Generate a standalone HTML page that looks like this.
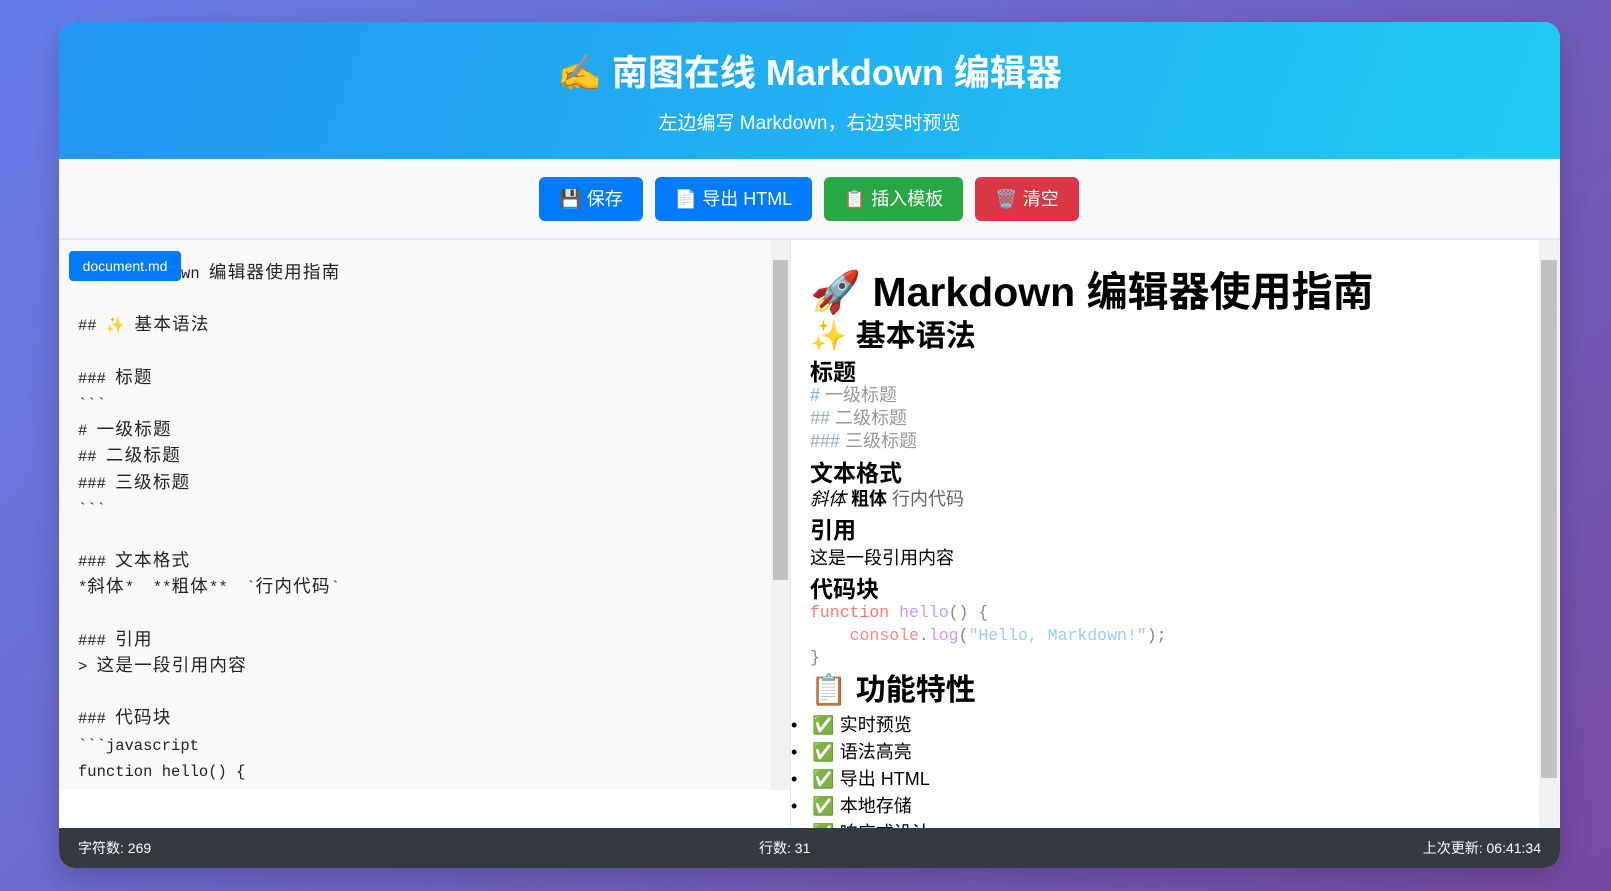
<!DOCTYPE html>
<html><head><meta charset="utf-8"><style>
*{margin:0;padding:0;box-sizing:border-box}
body{width:1611px;height:891px;overflow:hidden;background:linear-gradient(135deg,#667eea,#764ba2);font-family:"Liberation Sans","Noto Sans CJK SC",sans-serif;position:relative}
.card{position:absolute;left:59px;top:22px;width:1501px;height:846px;border-radius:16px;overflow:hidden;background:#fff;box-shadow:0 10px 30px rgba(0,0,0,.2)}
.hdr{position:absolute;left:0;top:0;width:100%;height:137px;background:linear-gradient(110deg,#2196f3,#21cbf3);color:#fff;text-align:center}
.hdr h1{position:absolute;top:28px;width:100%;font-size:36px;font-weight:bold;line-height:46px}
.hdr p{position:absolute;top:90px;width:100%;font-size:19px;line-height:24px}
.tb{position:absolute;top:137px;left:0;width:100%;height:81px;background:#f8f9fa;border-bottom:2px solid #e2e6ea}
.btn{position:absolute;top:18px;height:44px;border-radius:6px;color:#fff;font-size:18px;line-height:44px;text-align:center}
.ed{position:absolute;left:0;top:218px;width:731px;height:550px;background:#f9f9f9}
.ed pre{position:absolute;left:19px;top:21px;font-family:"Liberation Mono","Noto Sans CJK SC",monospace;font-size:15.5px;line-height:26.2px;color:#222}
.ed pre b{font-weight:normal;font-size:17.5px;letter-spacing:1.3px;font-family:"Noto Sans CJK SC",sans-serif;line-height:10px}
.lbl{position:absolute;left:10px;top:229px;width:112px;height:30px;background:#007bff;color:#fff;font-size:14px;line-height:30px;text-align:center;border-radius:4px}
.sb{position:absolute;background:#f1f1f1}
.sb i{position:absolute;left:2px;right:2px;background:#c1c1c1}
.div{position:absolute;left:731px;top:218px;width:1px;height:588px;background:#e2e6ea}
.pv{position:absolute;left:732px;top:218px;width:748px;height:588px;overflow:hidden;color:#000}
.pv div{position:absolute;left:19px;white-space:nowrap}
.h3{font-size:23px;font-weight:bold}
.t{font-size:18px}
.mono{font-family:"Liberation Mono","Noto Sans CJK SC",monospace;font-size:16.5px}
.ft{position:absolute;left:0;top:806px;width:100%;height:40px;background:#343a40;color:#fff;font-size:14px;line-height:40px}
</style></head><body>
<div class="card">
<div class="hdr"><h1>✍️ 南图在线 Markdown 编辑器</h1><p>左边编写 Markdown，右边实时预览</p></div>
<div class="tb">
<div class="btn" style="left:480px;width:104px;background:#007bff">💾 保存</div>
<div class="btn" style="left:596px;width:157px;background:#007bff">📄 导出 HTML</div>
<div class="btn" style="left:765px;width:139px;background:#28a745">📋 插入模板</div>
<div class="btn" style="left:916px;width:104px;background:#dc3545">🗑️ 清空</div>
</div>
<div class="ed"><pre># 🚀 Markdown <b>编辑器使用指南</b>

## ✨ <b>基本语法</b>

### <b>标题</b>
&#96;&#96;&#96;
# <b>一级标题</b>
## <b>二级标题</b>
### <b>三级标题</b>
&#96;&#96;&#96;

### <b>文本格式</b>
*<b>斜体</b>*  **<b>粗体</b>**  &#96;<b>行内代码</b>&#96;

### <b>引用</b>
&gt; <b>这是一段引用内容</b>

### <b>代码块</b>
&#96;&#96;&#96;javascript
function hello() {</pre></div>
<div class="sb" style="left:712px;top:218px;width:19px;height:550px"><i style="top:20px;height:320px"></i></div>
<div class="lbl">document.md</div>
<div class="div"></div>
<div class="pv">
<div style="top:27px;font-size:41px;font-weight:bold;line-height:50px">🚀 Markdown 编辑器使用指南</div>
<div style="top:79px;font-size:30px;font-weight:bold;line-height:36px">✨ 基本语法</div>
<div class="h3" style="top:113px">标题</div>
<div class="t" style="top:144px;line-height:23px;color:#999"><span style="color:#74b0ff">#</span> 一级标题<br><span style="color:#9ab">##</span> 二级标题<br><span style="color:#9ab">###</span> 三级标题</div>
<div class="h3" style="top:214px">文本格式</div>
<div class="t" style="top:245px"><i>斜体</i> <b>粗体</b> <span style="color:#666">行内代码</span></div>
<div class="h3" style="top:271px">引用</div>
<div class="t" style="top:304px">这是一段引用内容</div>
<div class="h3" style="top:330px">代码块</div>
<div class="mono" style="top:362px;line-height:22.5px;color:#888;white-space:pre"><span style="color:#f77">function</span> <span style="color:#c9f">hello</span>() {
    <span style="color:#f88">console</span>.<span style="color:#c9f">log</span>(<span style="color:#9cf">"Hello, Markdown!"</span>);
}</div>
<div style="top:433px;font-size:30px;font-weight:bold;line-height:36px">📋 功能特性</div>
<div class="t" style="top:472px;left:0;line-height:27px">•&nbsp;&nbsp;&nbsp;✅&nbsp;实时预览<br>•&nbsp;&nbsp;&nbsp;✅&nbsp;语法高亮<br>•&nbsp;&nbsp;&nbsp;✅&nbsp;导出 HTML<br>•&nbsp;&nbsp;&nbsp;✅&nbsp;本地存储<br>•&nbsp;&nbsp;&nbsp;✅&nbsp;响应式设计</div>
</div>
<div class="sb" style="left:1480px;top:218px;width:20px;height:588px"><i style="top:20px;height:518px"></i></div>
<div class="ft"><span style="position:absolute;left:19px">字符数: 269</span><span style="position:absolute;left:700px">行数: 31</span><span style="position:absolute;right:19px">上次更新: 06:41:34</span></div>
</div>
</body></html>
